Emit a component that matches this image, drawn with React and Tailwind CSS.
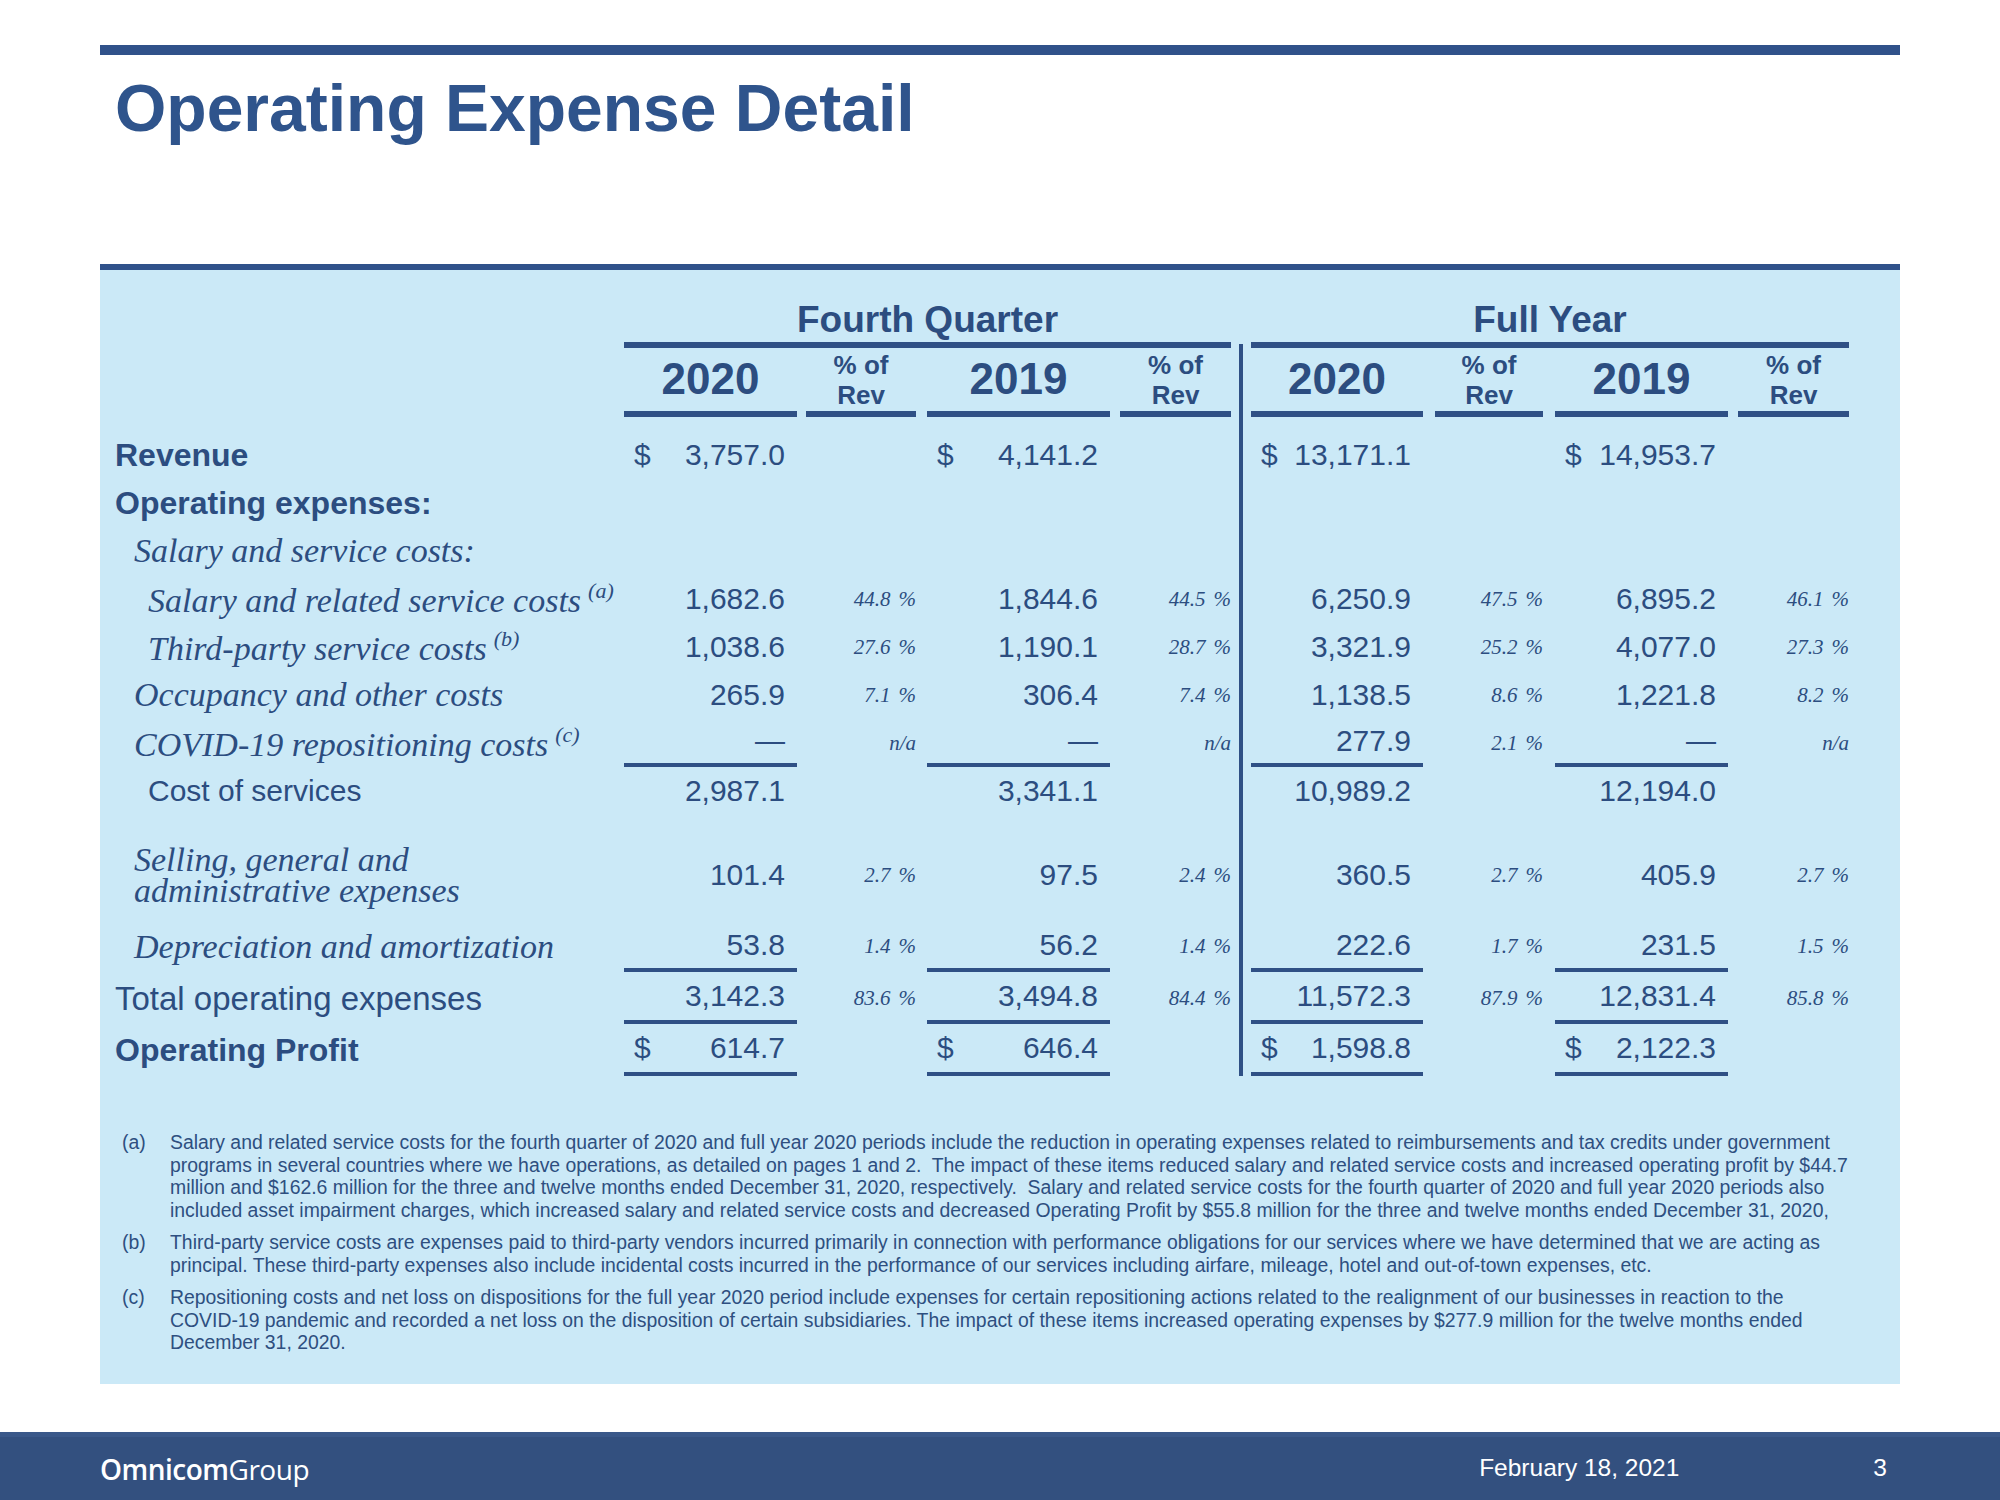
import React from "react";

const SANS = "font-['Liberation_Sans',Arial,sans-serif]";
const SERIF = "font-['Liberation_Serif','Times_New_Roman',serif] italic";

function ValCell({ className = "", d, v }) {
  return (
    <div
      className={`flex items-center justify-between pl-[10px] pr-[12px] ${SANS} text-[30px] leading-none ${className}`}
    >
      <span>{d ? "$" : ""}</span>
      <span>{v || ""}</span>
    </div>
  );
}

function PctCell({ className = "", v }) {
  if (!v) return <div className={className} />;
  return (
    <div className={`flex items-center justify-end ${SERIF} text-[21px] leading-none ${className}`}>
      {v === "n/a" ? (
        <span>n/a</span>
      ) : (
        <>
          <span>{v}</span>
          <span className="ml-[8px]">%</span>
        </>
      )}
    </div>
  );
}

function Sep() {
  return (
    <div className="w-[20px] flex justify-center">
      <div className="w-[4px] bg-[#2f5085]" />
    </div>
  );
}

function Row({ h, pad = "", label, vals = [], pcts = [], under = false }) {
  const ub = under ? "border-b-[4px] border-[#2f5085]" : "";
  return (
    <div className={`flex ${h}`}>
      <div className={`w-[509px] flex items-center ${pad}`}>{label}</div>
      <ValCell className={`w-[173px] ${ub} ${pad}`} {...(vals[0] || {})} />
      <PctCell className={`ml-[9px] w-[110px] ${pad}`} v={pcts[0]} />
      <ValCell className={`ml-[11px] w-[183px] ${ub} ${pad}`} {...(vals[1] || {})} />
      <PctCell className={`ml-[10px] w-[111px] ${pad}`} v={pcts[1]} />
      <Sep />
      <ValCell className={`w-[172px] ${ub} ${pad}`} {...(vals[2] || {})} />
      <PctCell className={`ml-[12px] w-[108px] ${pad}`} v={pcts[2]} />
      <ValCell className={`ml-[12px] w-[173px] ${ub} ${pad}`} {...(vals[3] || {})} />
      <PctCell className={`ml-[10px] w-[111px] ${pad}`} v={pcts[3]} />
    </div>
  );
}

const BoldLabel = ({ children }) => (
  <span className={`${SANS} font-bold text-[32px] leading-none`}>{children}</span>
);
const ItLabel = ({ children, indent, sup }) => (
  <span className={`${SERIF} text-[34px] leading-none ${indent}`}>
    {children}
    {sup ? <span className="text-[22px] ml-[7px] align-[14px]">{sup}</span> : null}
  </span>
);

function YearHead({ className, children }) {
  return (
    <div
      className={`flex items-center justify-center pb-[2px] border-b-[6px] border-[#2f5085] ${SANS} font-bold text-[44px] leading-none ${className}`}
    >
      {children}
    </div>
  );
}
function PctHead({ className }) {
  return (
    <div
      className={`flex flex-col items-center justify-center border-b-[6px] border-[#2f5085] ${SANS} font-bold text-[26px] leading-[30px] ${className}`}
    >
      <span className="block">% of</span>
      <span className="block">Rev</span>
    </div>
  );
}

const n = (v, d) => ({ v, d });

const footA = [
  "Salary and related service costs for the fourth quarter of 2020 and full year 2020 periods include the reduction in operating expenses related to reimbursements and tax credits under government",
  "programs in several countries where we have operations, as detailed on pages 1 and 2.  The impact of these items reduced salary and related service costs and increased operating profit by $44.7",
  "million and $162.6 million for the three and twelve months ended December 31, 2020, respectively.  Salary and related service costs for the fourth quarter of 2020 and full year 2020 periods also",
  "included asset impairment charges, which increased salary and related service costs and decreased Operating Profit by $55.8 million for the three and twelve months ended December 31, 2020,",
];
const footB = [
  "Third-party service costs are expenses paid to third-party vendors incurred primarily in connection with performance obligations for our services where we have determined that we are acting as",
  "principal. These third-party expenses also include incidental costs incurred in the performance of our services including airfare, mileage, hotel and out-of-town expenses, etc.",
];
const footC = [
  "Repositioning costs and net loss on dispositions for the full year 2020 period include expenses for certain repositioning actions related to the realignment of our businesses in reaction to the",
  "COVID-19 pandemic and recorded a net loss on the disposition of certain subsidiaries. The impact of these items increased operating expenses by $277.9 million for the twelve months ended",
  "December 31, 2020.",
];

function Foot({ tag, lines, className = "" }) {
  return (
    <div className={`flex ${className}`}>
      <div className="w-[48px] shrink-0">{tag}</div>
      <div className="flex flex-col">
        {lines.map((l, i) => (
          <span key={i} className="whitespace-pre">
            {l}
          </span>
        ))}
      </div>
    </div>
  );
}

export default function App() {
  return (
    <div className={`w-[2000px] h-[1500px] bg-white flex flex-col overflow-hidden ${SANS}`}>
      {/* top rule */}
      <div className="mt-[45px] mx-[100px] h-[10px] bg-[#30528a]" />
      {/* title */}
      <div className="h-[209px] mx-[100px] pt-[20px] pl-[15px]">
        <h1 className={`${SANS} font-bold text-[66px] leading-none text-[#2f548c]`}>
          Operating Expense Detail
        </h1>
      </div>

      {/* panel */}
      <div className="mx-[100px] h-[1120px] border-t-[6px] border-[#30528a] bg-[#cbe9f7] pl-[15px] text-[#2c4d80]">
        {/* group header */}
        <div className="flex h-[78px]">
          <div className="w-[509px]" />
          <div
            className={`w-[607px] flex items-end justify-center pb-[4px] border-b-[6px] border-[#2f5085] ${SANS} font-bold text-[37px] leading-none`}
          >
            Fourth Quarter
          </div>
          <div className="w-[20px] flex justify-center items-end">
            <div className="w-[4px] h-[4px] bg-[#2f5085]" />
          </div>
          <div
            className={`w-[598px] flex items-end justify-center pb-[4px] border-b-[6px] border-[#2f5085] ${SANS} font-bold text-[37px] leading-none`}
          >
            Full Year
          </div>
        </div>
        {/* year header */}
        <div className="flex h-[69px]">
          <div className="w-[509px]" />
          <YearHead className="w-[173px]">2020</YearHead>
          <PctHead className="ml-[9px] w-[110px]" />
          <YearHead className="ml-[11px] w-[183px]">2019</YearHead>
          <PctHead className="ml-[10px] w-[111px]" />
          <Sep />
          <YearHead className="w-[172px]">2020</YearHead>
          <PctHead className="ml-[12px] w-[108px]" />
          <YearHead className="ml-[12px] w-[173px]">2019</YearHead>
          <PctHead className="ml-[10px] w-[111px]" />
        </div>

        <Row
          h="h-[62px]"
          pad="pt-[14px]"
          label={<BoldLabel>Revenue</BoldLabel>}
          vals={[n("3,757.0", 1), n("4,141.2", 1), n("13,171.1", 1), n("14,953.7", 1)]}
        />
        <Row h="h-[48px]" label={<BoldLabel>Operating expenses:</BoldLabel>} />
        <Row h="h-[48px]" label={<ItLabel indent="pl-[19px]">Salary and service costs:</ItLabel>} />
        <Row
          h="h-[48px]"
          label={
            <ItLabel indent="pl-[33px]" sup="(a)">
              Salary and related service costs
            </ItLabel>
          }
          vals={[n("1,682.6"), n("1,844.6"), n("6,250.9"), n("6,895.2")]}
          pcts={["44.8", "44.5", "47.5", "46.1"]}
        />
        <Row
          h="h-[48px]"
          label={
            <ItLabel indent="pl-[33px]" sup="(b)">
              Third-party service costs
            </ItLabel>
          }
          vals={[n("1,038.6"), n("1,190.1"), n("3,321.9"), n("4,077.0")]}
          pcts={["27.6", "28.7", "25.2", "27.3"]}
        />
        <Row
          h="h-[48px]"
          label={<ItLabel indent="pl-[19px]">Occupancy and other costs</ItLabel>}
          vals={[n("265.9"), n("306.4"), n("1,138.5"), n("1,221.8")]}
          pcts={["7.1", "7.4", "8.6", "8.2"]}
        />
        <Row
          h="h-[48px]"
          under
          label={
            <ItLabel indent="pl-[19px]" sup="(c)">
              COVID-19 repositioning costs
            </ItLabel>
          }
          vals={[n("\u2014"), n("\u2014"), n("277.9"), n("\u2014")]}
          pcts={["n/a", "n/a", "2.1", "n/a"]}
        />
        <Row
          h="h-[48px]"
          label={<span className={`${SANS} text-[30px] leading-none pl-[33px]`}>Cost of services</span>}
          vals={[n("2,987.1"), n("3,341.1"), n("10,989.2"), n("12,194.0")]}
        />
        <Row
          h="h-[106px]"
          pad="pt-[14px]"
          label={
            <span className={`${SERIF} text-[34px] leading-[31px] pl-[19px]`}>
              Selling, general and
              <br />
              administrative expenses
            </span>
          }
          vals={[n("101.4"), n("97.5"), n("360.5"), n("405.9")]}
          pcts={["2.7", "2.4", "2.7", "2.7"]}
        />
        <Row
          h="h-[51px]"
          under
          label={<ItLabel indent="pl-[19px]">Depreciation and amortization</ItLabel>}
          vals={[n("53.8"), n("56.2"), n("222.6"), n("231.5")]}
          pcts={["1.4", "1.4", "1.7", "1.5"]}
        />
        <Row
          h="h-[52px]"
          under
          label={<span className={`${SANS} text-[33px] leading-none`}>Total operating expenses</span>}
          vals={[n("3,142.3"), n("3,494.8"), n("11,572.3"), n("12,831.4")]}
          pcts={["83.6", "84.4", "87.9", "85.8"]}
        />
        <Row
          h="h-[52px]"
          under
          label={<BoldLabel>Operating Profit</BoldLabel>}
          vals={[n("614.7", 1), n("646.4", 1), n("1,598.8", 1), n("2,122.3", 1)]}
        />

        {/* footnotes */}
        <div className={`mt-[55px] ml-[7px] ${SANS} text-[19.4px] leading-[22.5px] text-[#2e4f80]`}>
          <Foot tag="(a)" lines={footA} />
          <Foot tag="(b)" lines={footB} className="mt-[10px]" />
          <Foot tag="(c)" lines={footC} className="mt-[10px]" />
        </div>
      </div>

      {/* footer */}
      <div className="mt-[48px] h-[68px] bg-[#33507f] border-t-[5px] border-[#3a5889] flex items-center pl-[100px] pr-[113px] text-white">
        <div className="font-['Open_Sans',sans-serif] text-[28px] leading-none tracking-[-0.5px]">
          <span className="font-semibold">Omnicom</span>
          <span className="font-normal">Group</span>
        </div>
        <div className={`ml-auto ${SANS} text-[24.5px] leading-none`}>February 18, 2021</div>
        <div className={`ml-[194px] ${SANS} text-[24.5px] leading-none`}>3</div>
      </div>
    </div>
  );
}
